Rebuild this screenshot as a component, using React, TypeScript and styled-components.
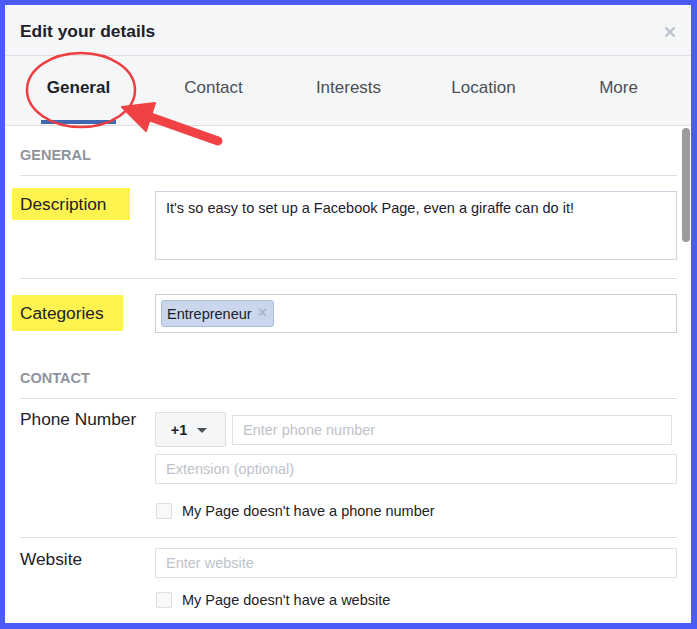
import styled, { createGlobalStyle } from "styled-components";

const GlobalStyle = createGlobalStyle`
  html, body {
    margin: 0;
    padding: 0;
    background: #4a5bf6;
  }
  * {
    box-sizing: border-box;
  }
`;

const tabs = ["General", "Contact", "Interests", "Location", "More"];

const Page = styled.div({
  position: "relative",
  width: "697px",
  height: "629px",
  padding: "5px 6px 6px 5px",
  background: "#4a5bf6",
  fontFamily: '"Liberation Sans", Arial, sans-serif',
  color: "#1d2129",
  overflow: "hidden",
});

const Dialog = styled.div({
  position: "relative",
  width: "100%",
  height: "100%",
  background: "#fff",
  overflow: "hidden",
  display: "flex",
  flexDirection: "column",
});

const Header = styled.div({
  height: "51px",
  flexShrink: 0,
  display: "flex",
  alignItems: "center",
  justifyContent: "space-between",
  padding: "2px 14px 0 15px",
  background: "#f5f6f7",
  borderBottom: "1px solid #dddfe2",
});

const Title = styled.h2({
  margin: 0,
  fontSize: "17.4px",
  fontWeight: "bold",
  color: "#1d2129",
});

const CloseButton = styled.div({
  width: "14px",
  height: "14px",
  display: "flex",
  alignItems: "center",
  justifyContent: "center",
  marginTop: "1px",
});

const TabBar = styled.div({
  height: "70px",
  flexShrink: 0,
  display: "grid",
  gridTemplateColumns: "repeat(5, 135px)",
  padding: "0 0 0 6px",
  background: "#f5f6f7",
  borderBottom: "1px solid #dddfe2",
});

const Tab = styled.div<{ $active?: boolean }>`
  position: relative;
  display: flex;
  align-items: center;
  justify-content: center;
  padding-bottom: 6px;
  font-size: 17px;
  font-weight: ${(p) => (p.$active ? "bold" : "normal")};
  color: ${(p) => (p.$active ? "#1d2129" : "#4b4f56")};

  &::after {
    content: "";
    display: ${(p) => (p.$active ? "block" : "none")};
    position: absolute;
    left: 30px;
    right: 30px;
    bottom: 1px;
    height: 4px;
    background: #4267b2;
  }
`;

const Body = styled.div({
  flex: 1,
  padding: "0 14px 0 15px",
});

const SectionTitle = styled.div({
  padding: "20px 0 11px",
  fontSize: "14.5px",
  fontWeight: "bold",
  color: "#90949c",
  lineHeight: "18px",
  borderBottom: "1px solid #dddfe2",
});

const Row = styled.div<{ $line?: boolean; $top?: number; $bottom?: number }>`
  display: grid;
  grid-template-columns: 135px 1fr;
  padding-top: ${(p) => p.$top ?? 15}px;
  padding-bottom: ${(p) => p.$bottom ?? 18}px;
  border-bottom: ${(p) => (p.$line ? "1px solid #dddfe2" : "none")};
`;

const Label = styled.div<{ $offset?: number }>`
  font-size: 17.3px;
  line-height: 20px;
  margin-top: ${(p) => p.$offset ?? 0}px;
`;

const Highlight = styled.span<{ $padRight: number; $padY: number }>`
  display: inline-block;
  background: #fff44f;
  margin-left: -8px;
  padding: ${(p) => p.$padY}px ${(p) => p.$padRight}px ${(p) => p.$padY}px 8px;
`;

const Fields = styled.div({
  display: "flex",
  flexDirection: "column",
});

const TextArea = styled.div({
  height: "69px",
  border: "1px solid #ccd3de",
  padding: "7px 10px",
  fontSize: "14.5px",
  lineHeight: "18px",
  color: "#1d2129",
});

const TokenBox = styled.div({
  height: "39px",
  border: "1px solid #ccd0d5",
  padding: "5px 5px",
  display: "flex",
  alignItems: "center",
});

const Token = styled.div({
  height: "27px",
  display: "flex",
  alignItems: "center",
  gap: "5px",
  padding: "0 5px",
  background: "#c9d6ec",
  border: "1px solid #a9bddf",
  borderRadius: "3px",
  fontSize: "14.5px",
  color: "#1d2129",
});

const TokenRemove = styled.span({
  color: "#a3aec2",
  fontSize: "13px",
  lineHeight: "1",
  marginTop: "-3px",
});

const PhoneLine = styled.div({
  display: "flex",
  alignItems: "center",
  gap: "6px",
  paddingRight: "5px",
});

const CodeButton = styled.div({
  width: "71px",
  height: "35px",
  flexShrink: 0,
  display: "flex",
  alignItems: "center",
  justifyContent: "center",
  gap: "10px",
  background: "#f5f6f7",
  border: "1px solid #dddfe2",
  borderRadius: "2px",
  fontSize: "14.5px",
  fontWeight: "bold",
  color: "#1d2129",
  paddingRight: "3px",
});

const Caret = styled.span({
  width: 0,
  height: 0,
  borderLeft: "5px solid transparent",
  borderRight: "5px solid transparent",
  borderTop: "5px solid #4b4f56",
  marginTop: "1px",
});

const Input = styled.div<{ $mt?: number }>`
  flex: 1 0 auto;
  height: 30px;
  margin-top: ${(p) => p.$mt ?? 0}px;
  border: 1px solid #dddfe2;
  padding: 0 10px;
  display: flex;
  align-items: center;
  font-size: 14.5px;
  color: #bec3c9;
`;

const CheckLine = styled.div<{ $mt: number }>`
  display: flex;
  align-items: center;
  gap: 10px;
  margin-top: ${(p) => p.$mt}px;
  padding-left: 1px;
  font-size: 14.5px;
  color: #1d2129;
`;

const Checkbox = styled.span({
  width: "16px",
  height: "16px",
  border: "1px solid #dddfe2",
  borderRadius: "2px",
  background: "#f9f9f9",
});

const ScrollThumb = styled.div({
  position: "absolute",
  right: "1px",
  top: "123px",
  width: "8px",
  height: "114px",
  borderRadius: "4px",
  background: "#9b9b9b",
});

const Annotations = styled.svg({
  position: "absolute",
  top: 0,
  left: 0,
  pointerEvents: "none",
});

export default function App() {
  return (
    <Page>
      <GlobalStyle />
      <Dialog>
        <Header>
          <Title>Edit your details</Title>
          <CloseButton>
            <svg width="12" height="12" viewBox="0 0 12 12">
              <path d="M1.5 1.5 L10.5 10.5 M10.5 1.5 L1.5 10.5" stroke="#bcc2ce" strokeWidth="2.4" />
            </svg>
          </CloseButton>
        </Header>
        <TabBar>
          {tabs.map((t, i) => (
            <Tab key={t} $active={i === 0}>
              {t}
            </Tab>
          ))}
        </TabBar>
        <Body>
          <SectionTitle>GENERAL</SectionTitle>
          <Row $line>
            <Label $offset={-3}>
              <Highlight $padRight={24} $padY={6}>Description</Highlight>
            </Label>
            <TextArea>It's so easy to set up a Facebook Page, even a giraffe can do it!</TextArea>
          </Row>
          <Row $bottom={16}>
            <Label $offset={1}>
              <Highlight $padRight={19} $padY={8}>Categories</Highlight>
            </Label>
            <TokenBox>
              <Token>
                Entrepreneur
                <TokenRemove>✕</TokenRemove>
              </Token>
            </TokenBox>
          </Row>
          <SectionTitle>CONTACT</SectionTitle>
          <Row $line $top={13} $bottom={18}>
            <Label $offset={-3}>Phone Number</Label>
            <Fields>
              <PhoneLine>
                <CodeButton>
                  +1 <Caret />
                </CodeButton>
                <Input>Enter phone number</Input>
              </PhoneLine>
              <Input $mt={7}>Extension (optional)</Input>
              <CheckLine $mt={19}>
                <Checkbox />
                My Page doesn't have a phone number
              </CheckLine>
            </Fields>
          </Row>
          <Row $top={10} $bottom={16}>
            <Label $offset={1}>Website</Label>
            <Fields>
              <Input>Enter website</Input>
              <CheckLine $mt={14}>
                <Checkbox />
                My Page doesn't have a website
              </CheckLine>
            </Fields>
          </Row>
        </Body>
        <ScrollThumb />
      </Dialog>
      <Annotations width="697" height="629" viewBox="0 0 697 629">
        <ellipse cx="81" cy="90" rx="54" ry="37" fill="none" stroke="#ee3e40" strokeWidth="2.5" />
        <line x1="218" y1="141" x2="142" y2="114" stroke="#f04244" strokeWidth="9" strokeLinecap="round" />
        <polygon points="122,107 155,103 146,131" fill="#f04244" stroke="#f04244" strokeWidth="2" strokeLinejoin="round" />
      </Annotations>
    </Page>
  );
}
